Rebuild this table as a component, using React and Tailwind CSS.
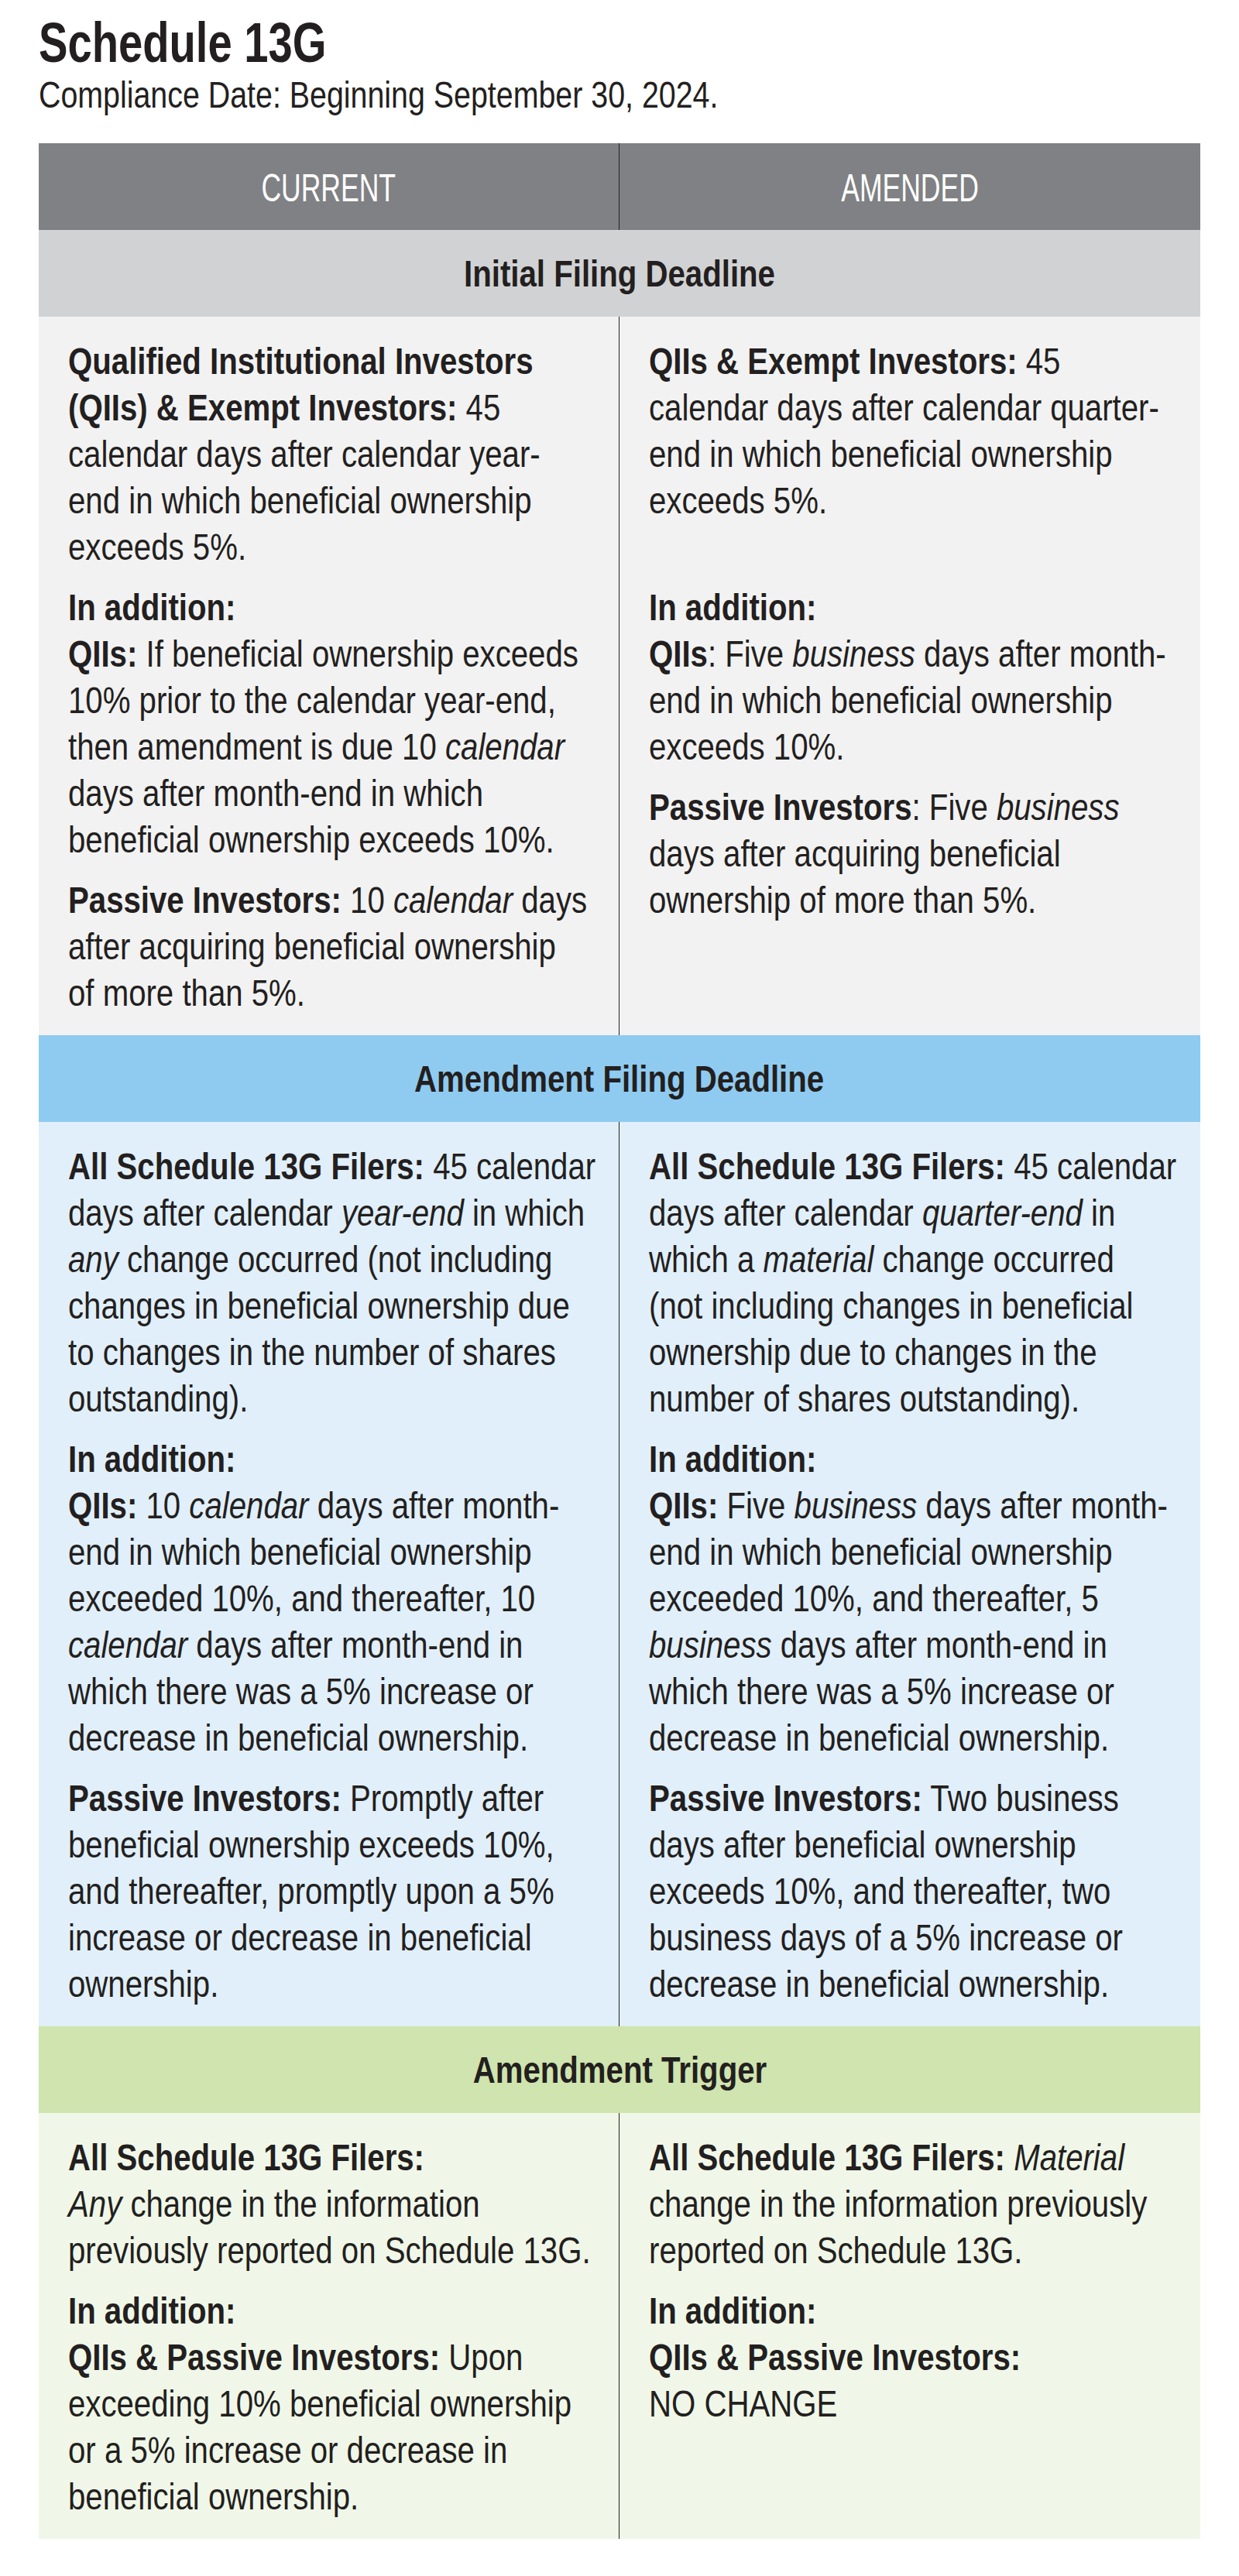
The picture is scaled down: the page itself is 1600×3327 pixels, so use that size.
import React from 'react'

// no condensed face is installed, so Liberation Sans is narrowed with scale-x
const font = { fontFamily: '"Liberation Sans", Arial, sans-serif' }

function B({ children }) {
  return <span className="font-bold">{children}</span>
}

function I({ children }) {
  return <span className="italic">{children}</span>
}

function Para({ lines, className = '' }) {
  return (
    <div className={className}>
      {lines.map((line, i) => (
        <div key={i} className="whitespace-nowrap origin-left scale-x-[0.82]">{line}</div>
      ))}
    </div>
  )
}

function Cell({ paras, divider }) {
  return (
    <div className={`pt-[27px] pb-[25px] px-[38px] ${divider ? 'border-r border-[#231f20]' : ''}`}>
      {paras.map((p, i) => (
        <Para key={i} lines={p.lines} className={i === 0 ? '' : p.blank ? 'mt-[78px]' : 'mt-[18px]'} />
      ))}
    </div>
  )
}

function SectionRow({ title, bg }) {
  return (
    <div className={`h-[112px] flex items-center justify-center font-bold ${bg}`}>
      <span className="inline-block whitespace-nowrap scale-x-[0.82]">{title}</span>
    </div>
  )
}

function BodyRow({ left, right, bg }) {
  return (
    <div className={`grid grid-cols-2 ${bg}`}>
      <Cell paras={left} divider />
      <Cell paras={right} />
    </div>
  )
}

const initialLeft = [
  {
    lines: [
      <B>Qualified Institutional Investors</B>,
      <><B>(QIIs) &amp; Exempt Investors:</B> 45</>,
      'calendar days after calendar year-',
      'end in which beneficial ownership',
      'exceeds 5%.',
    ],
  },
  {
    lines: [
      <B>In addition:</B>,
      <><B>QIIs:</B> If beneficial ownership exceeds</>,
      '10% prior to the calendar year-end,',
      <>then amendment is due 10 <I>calendar</I></>,
      'days after month-end in which',
      'beneficial ownership exceeds 10%.',
    ],
  },
  {
    lines: [
      <><B>Passive Investors:</B> 10 <I>calendar</I> days</>,
      'after acquiring beneficial ownership',
      'of more than 5%.',
    ],
  },
]

const initialRight = [
  {
    lines: [
      <><B>QIIs &amp; Exempt Investors:</B> 45</>,
      'calendar days after calendar quarter-',
      'end in which beneficial ownership',
      'exceeds 5%.',
    ],
  },
  {
    blank: true,
    lines: [
      <B>In addition:</B>,
      <><B>QIIs</B>: Five <I>business</I> days after month-</>,
      'end in which beneficial ownership',
      'exceeds 10%.',
    ],
  },
  {
    lines: [
      <><B>Passive Investors</B>: Five <I>business</I></>,
      'days after acquiring beneficial',
      'ownership of more than 5%.',
    ],
  },
]

const amendLeft = [
  {
    lines: [
      <><B>All Schedule 13G Filers:</B> 45 calendar</>,
      <>days after calendar <I>year-end</I> in which</>,
      <><I>any</I> change occurred (not including</>,
      'changes in beneficial ownership due',
      'to changes in the number of shares',
      'outstanding).',
    ],
  },
  {
    lines: [
      <B>In addition:</B>,
      <><B>QIIs:</B> 10 <I>calendar</I> days after month-</>,
      'end in which beneficial ownership',
      'exceeded 10%, and thereafter, 10',
      <><I>calendar</I> days after month-end in</>,
      'which there was a 5% increase or',
      'decrease in beneficial ownership.',
    ],
  },
  {
    lines: [
      <><B>Passive Investors:</B> Promptly after</>,
      'beneficial ownership exceeds 10%,',
      'and thereafter, promptly upon a 5%',
      'increase or decrease in beneficial',
      'ownership.',
    ],
  },
]

const amendRight = [
  {
    lines: [
      <><B>All Schedule 13G Filers:</B> 45 calendar</>,
      <>days after calendar <I>quarter-end</I> in</>,
      <>which a <I>material</I> change occurred</>,
      '(not including changes in beneficial',
      'ownership due to changes in the',
      'number of shares outstanding).',
    ],
  },
  {
    lines: [
      <B>In addition:</B>,
      <><B>QIIs:</B> Five <I>business</I> days after month-</>,
      'end in which beneficial ownership',
      'exceeded 10%, and thereafter, 5',
      <><I>business</I> days after month-end in</>,
      'which there was a 5% increase or',
      'decrease in beneficial ownership.',
    ],
  },
  {
    lines: [
      <><B>Passive Investors:</B> Two business</>,
      'days after beneficial ownership',
      'exceeds 10%, and thereafter, two',
      'business days of a 5% increase or',
      'decrease in beneficial ownership.',
    ],
  },
]

const triggerLeft = [
  {
    lines: [
      <B>All Schedule 13G Filers:</B>,
      <><I>Any</I> change in the information</>,
      'previously reported on Schedule 13G.',
    ],
  },
  {
    lines: [
      <B>In addition:</B>,
      <><B>QIIs &amp; Passive Investors:</B> Upon</>,
      'exceeding 10% beneficial ownership',
      'or a 5% increase or decrease in',
      'beneficial ownership.',
    ],
  },
]

const triggerRight = [
  {
    lines: [
      <><B>All Schedule 13G Filers:</B> <I>Material</I></>,
      'change in the information previously',
      'reported on Schedule 13G.',
    ],
  },
  {
    lines: [
      <B>In addition:</B>,
      <B>QIIs &amp; Passive Investors:</B>,
      'NO CHANGE',
    ],
  },
]

export default function App() {
  return (
    <div style={font} className="min-h-screen bg-white text-[#231f20] px-[50px] pt-[19px] pb-[44px]">
      <h1 className="text-[72px] leading-[72px] font-bold whitespace-nowrap origin-left scale-x-[0.78]">Schedule 13G</h1>
      <p className="mt-[4px] text-[48px] leading-[56px] whitespace-nowrap origin-left scale-x-[0.82]">Compliance Date: Beginning September 30, 2024.</p>

      <div className="mt-[34px] w-[1500px] text-[49px] leading-[60px]">
        <div className="grid grid-cols-2 h-[112px] bg-[#808184] text-white text-[50px]">
          <div className="flex items-center justify-center pt-1 border-r border-[#231f20]">
            <span className="inline-block scale-x-[0.71]">CURRENT</span>
          </div>
          <div className="flex items-center justify-center pt-1">
            <span className="inline-block scale-x-[0.71]">AMENDED</span>
          </div>
        </div>

        <SectionRow title="Initial Filing Deadline" bg="bg-[#d1d2d4]" />
        <BodyRow left={initialLeft} right={initialRight} bg="bg-[#f2f2f2]" />

        <SectionRow title="Amendment Filing Deadline" bg="bg-[#8fcbf0]" />
        <BodyRow left={amendLeft} right={amendRight} bg="bg-[#e1effa]" />

        <SectionRow title="Amendment Trigger" bg="bg-[#cfe4ae]" />
        <BodyRow left={triggerLeft} right={triggerRight} bg="bg-[#f0f7e8]" />
      </div>
    </div>
  )
}
